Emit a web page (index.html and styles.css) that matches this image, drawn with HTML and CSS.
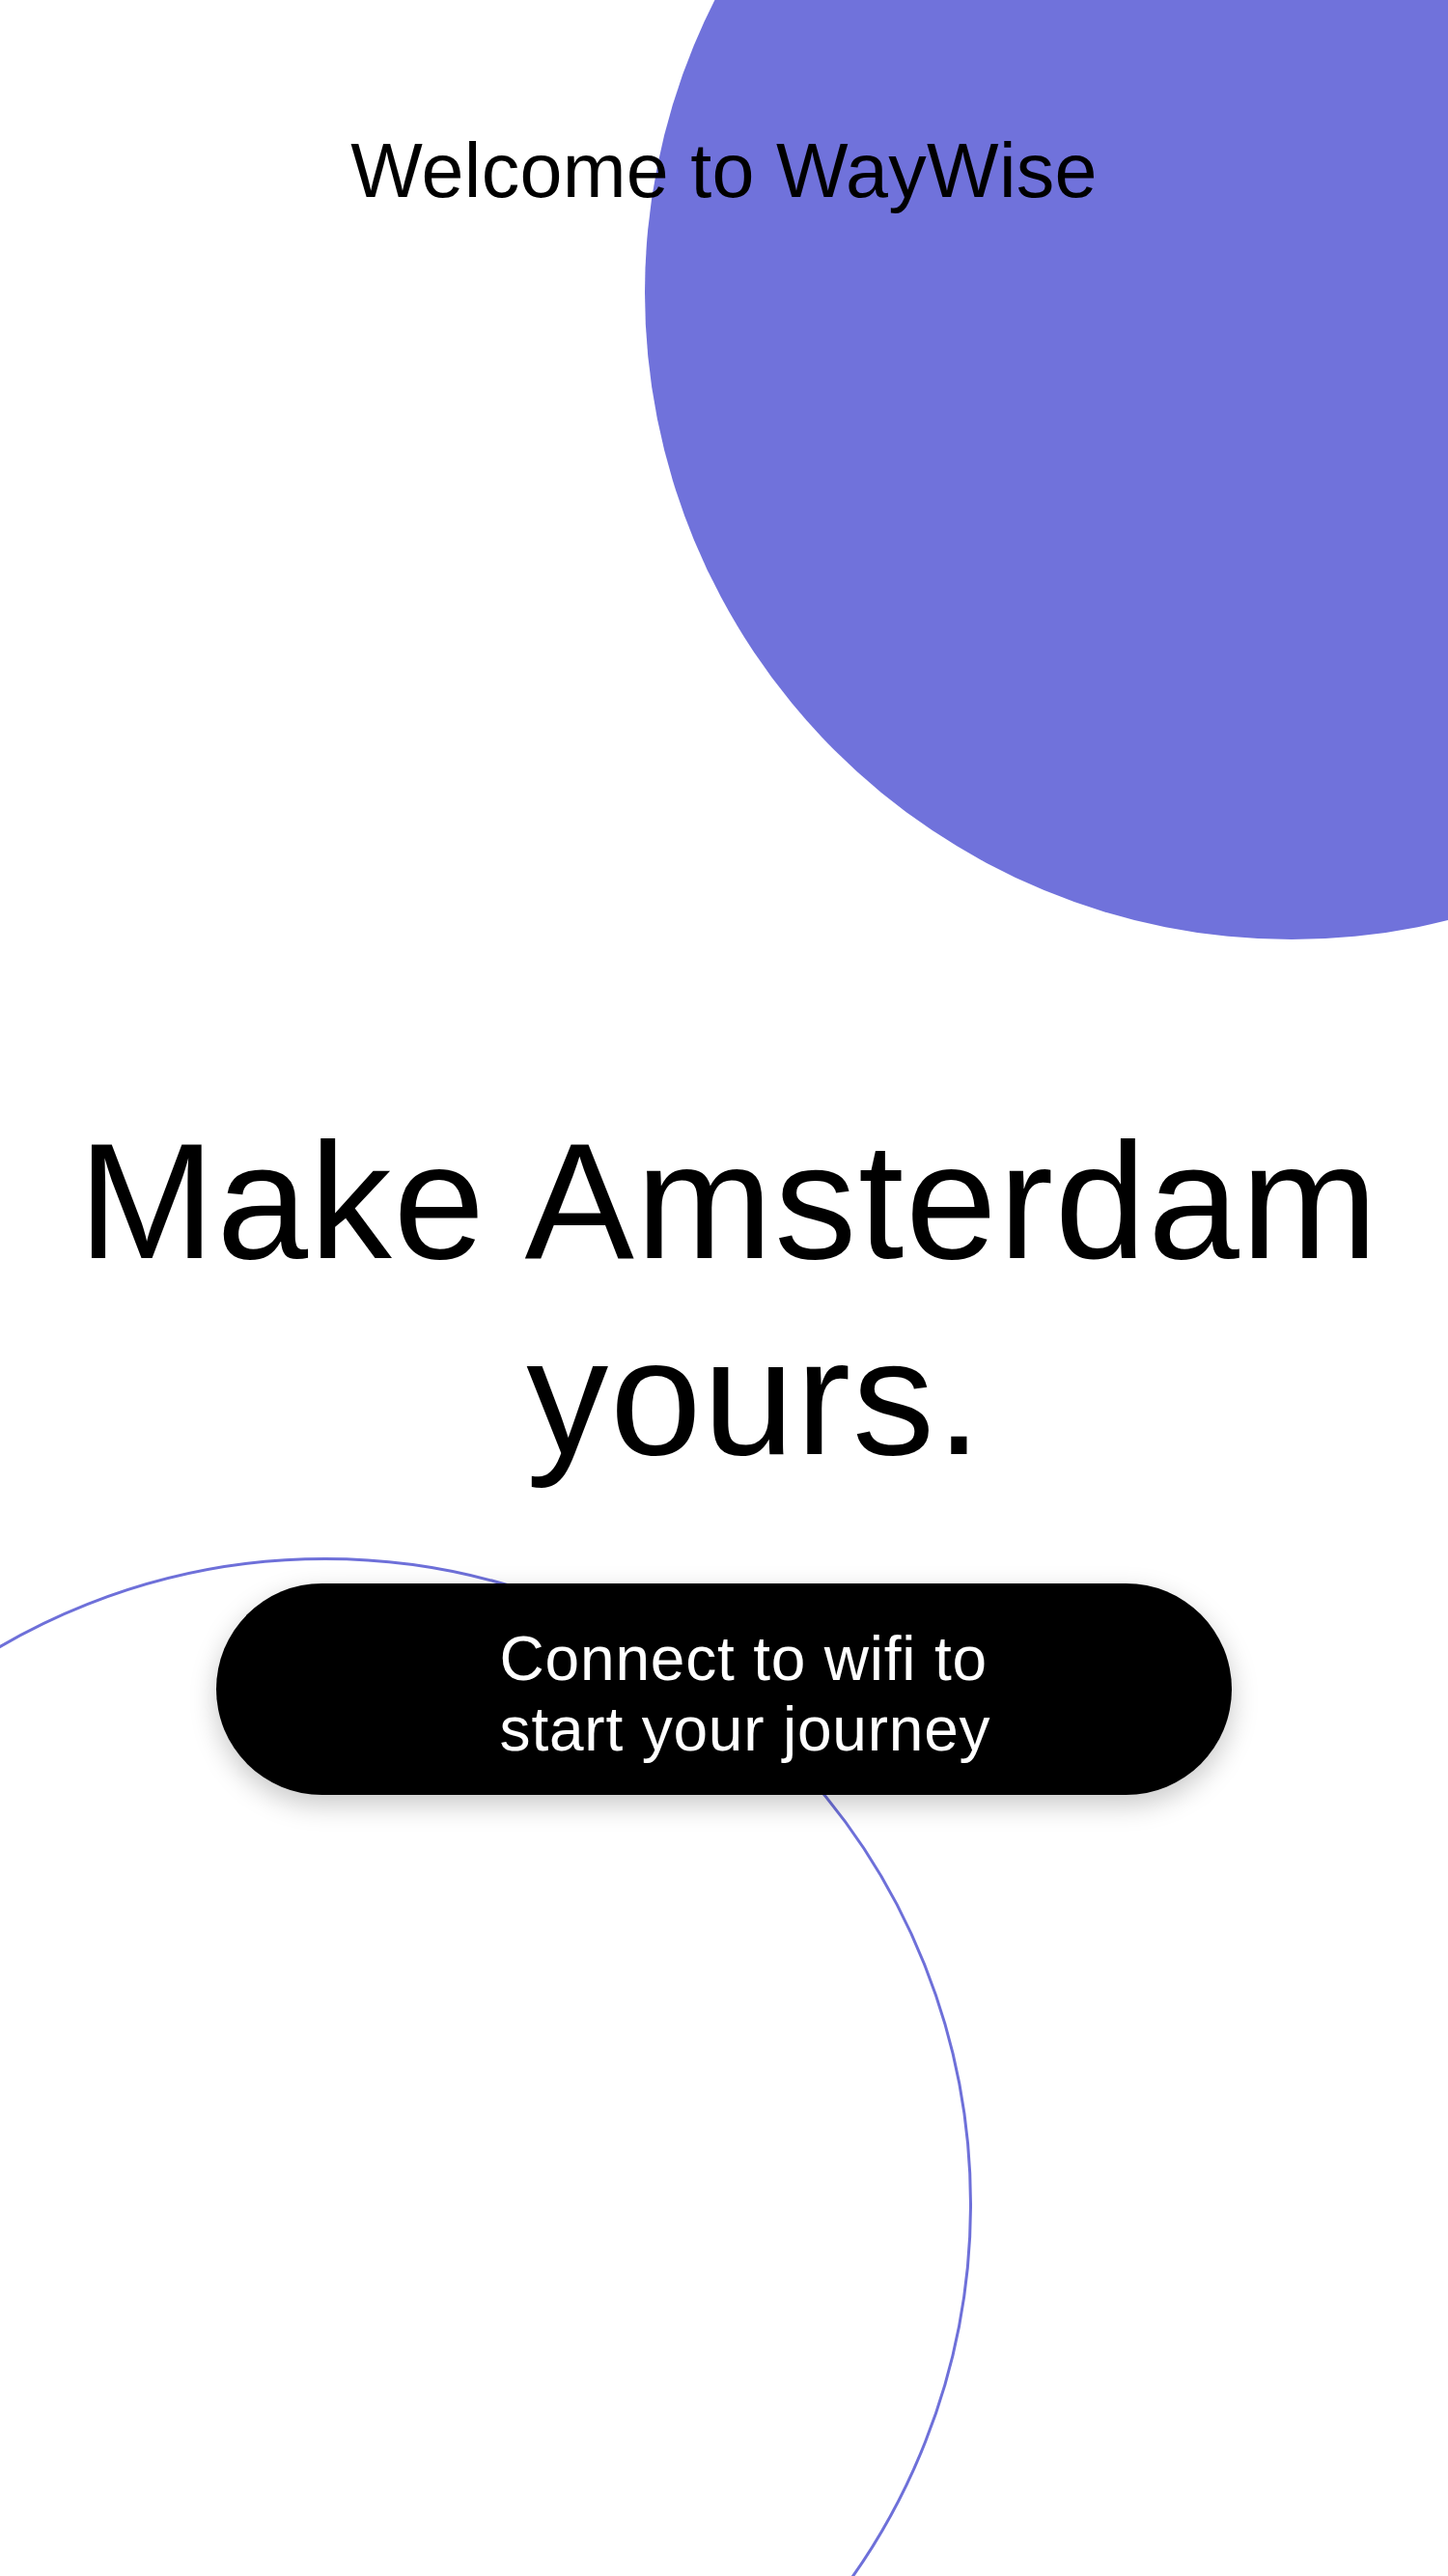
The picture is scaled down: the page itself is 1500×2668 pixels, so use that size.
FILE: index.html
```html
<!DOCTYPE html>
<html lang="en">
<head>
<meta charset="utf-8">
<title>WayWise</title>
<link rel="stylesheet" href="styles.css">
</head>
<body>
<div class="screen">
  <div class="blob" aria-hidden="true"></div>
  <div class="ring" aria-hidden="true"></div>
  <main class="content">
    <p class="welcome">Welcome to WayWise</p>
    <h1 class="headline">
      <span class="line line-1">Make Amsterdam</span>
      <span class="line line-2">yours.</span>
    </h1>
    <button class="cta" type="button"><span class="cta-text">Connect to wifi to<br>start your journey</span></button>
  </main>
</div>
</body>
</html>
```

FILE: styles.css
```css
html, body {
  margin: 0;
  padding: 0;
  background: #ffffff;
}

body {
  font-family: "Liberation Sans", Arial, Helvetica, sans-serif;
  color: #000000;
}

.screen {
  position: relative;
  width: 1500px;
  height: 2668px;
  overflow: hidden;
  background: #ffffff;
}

.blob {
  position: absolute;
  left: 668px;
  top: -367px;
  width: 1340px;
  height: 1340px;
  border-radius: 50%;
  background: #7072db;
  z-index: 0;
}

.ring {
  position: absolute;
  left: -333px;
  top: 1613px;
  width: 1340px;
  height: 1340px;
  box-sizing: border-box;
  border-radius: 50%;
  border: 3px solid #6e70d9;
  z-index: 0;
}

.content {
  position: relative;
  z-index: 1;
  display: flex;
  flex-direction: column;
  align-items: center;
  padding-top: 131px;
}

.welcome {
  margin: 0;
  font-size: 79px;
  line-height: 91px;
  font-weight: 400;
  letter-spacing: 0.3px;
  text-align: center;
}

.headline {
  margin: 921px 0 0 0;
  font-size: 170px;
  line-height: 203px;
  font-weight: 400;
  letter-spacing: 1.8px;
  text-align: center;
  width: 1500px;
}

.line {
  display: block;
}

.line-1 {
  padding-left: 10px;
}

.line-2 {
  padding-left: 64px;
}

.cta {
  margin-top: 91px;
  width: 1052px;
  height: 219px;
  border: none;
  border-radius: 110px;
  background: #000000;
  color: #ffffff;
  box-shadow: 0 10px 28px rgba(0, 0, 0, 0.22);
  display: flex;
  align-items: center;
  justify-content: center;
  padding: 10px 0 0 44px;
  font-family: "Liberation Sans", Arial, Helvetica, sans-serif;
  font-size: 64px;
  line-height: 73px;
  font-weight: 400;
  letter-spacing: 0.8px;
  cursor: pointer;
}

.cta-text {
  display: block;
  text-align: left;
}
```
